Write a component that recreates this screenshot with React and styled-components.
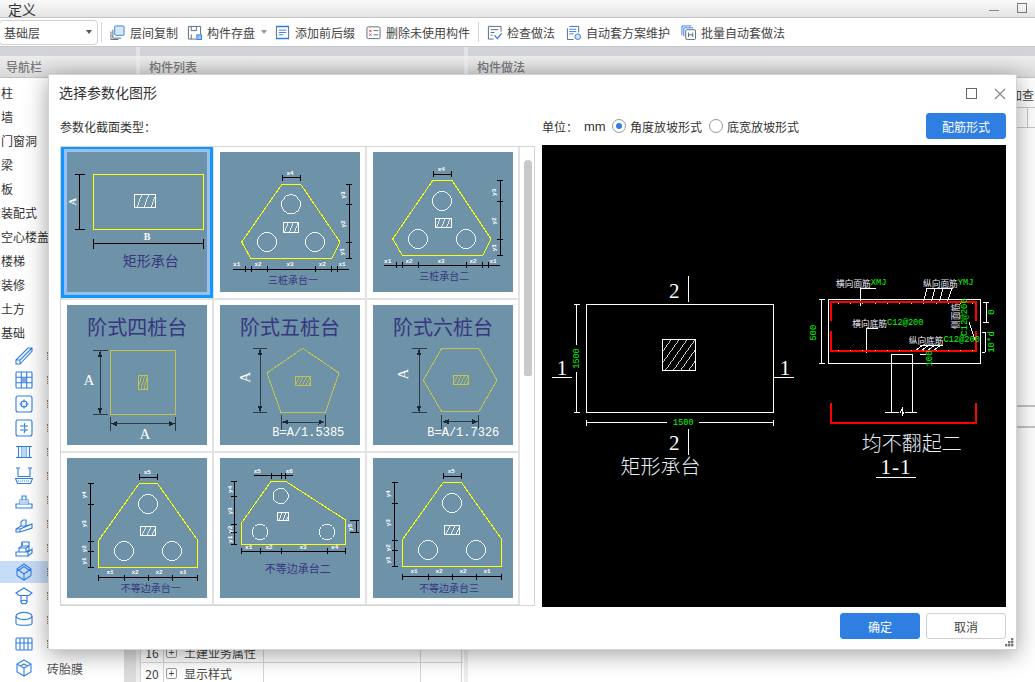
import React from 'react';
import styled, { createGlobalStyle } from 'styled-components';

const CJK = '"Noto Sans CJK SC", "Liberation Sans", sans-serif';
const BLUE = '#2f7fe2';

const Global = createGlobalStyle`
  html, body { margin: 0; padding: 0; background: #fff; }
  body { font-family: ${CJK}; font-size: 12px; color: #444; }
  * { box-sizing: border-box; }
`;

const Page = styled.div`
  position: relative; width: 1035px; height: 682px; overflow: hidden; background: #fff;
  display: flex; flex-direction: column;
`;
const TitleBar = styled.div`
  height: 18px; flex: none; display: flex; align-items: center; padding-left: 8px;
  font-size: 14px; line-height: 18px; color: #333;
  background: linear-gradient(#fafafa, #e4e4e4); border-bottom: 1px solid #c4c4c4;
`;
const TitleText = styled.span`flex: 1;`;
const WinMin = styled.span`width: 10px; height: 1px; background: #888; margin: 3px 18px 0 0;`;
const WinMax = styled.span`width: 10px; height: 10px; border: 1px solid #777; margin: -1px 8px 0 0;`;
const Toolbar = styled.div`
  height: 28px; flex: none; display: flex; align-items: center; background: #fff;
`;
const Combo = styled.div`
  width: 99px; height: 25px; margin-left: -1px; padding: 0 5px 0 4px; flex: none;
  display: flex; align-items: center; justify-content: space-between;
  border: 1px solid #d2d2d2; border-radius: 4px; color: #444;
`;
const Caret = styled.span`
  width: 0; height: 0; border-left: 3px solid transparent; border-right: 3px solid transparent;
  border-top: 4px solid ${p => p.$c || '#555'};
`;
const Sep = styled.span`width: 1px; height: 20px; background: #d8d8d8; flex: none; margin: ${p => p.$m};`;
const Tool = styled.div`
  display: flex; align-items: center; gap: 5px; flex: none; margin-right: ${p => p.$mr}px;
  color: #444; white-space: nowrap;
`;
const ToolIcon = styled.svg`width: 15px; height: 15px; flex: none; display: block;`;
const ToolCaret = styled.span`margin: 0 8px 0 6px; display: flex;`;
const Strip = styled.div`
  height: 10px; flex: none; border-top: 1px solid #c6c7cc;
  background: linear-gradient(90deg, #d3d4d9 136px, #e4e4e8 136px, #e4e4e8 140px, #d3d4d9 140px, #d3d4d9 464px, #e4e4e8 464px, #e4e4e8 468px, #d3d4d9 468px);
`;
const Columns = styled.div`flex: 1; min-height: 0; display: flex;`;
const PanelHead = styled.div`
  height: 22px; flex: none; display: flex; align-items: center; padding-left: ${p => p.$pl}px;
  font-weight: 500; color: #77797d;
  background: linear-gradient(#ededed, #d9d9d9); border-bottom: 1px solid #c2c2c2;
`;
const NavPanel = styled.div`width: 136px; flex: none; display: flex; flex-direction: column;`;
const NavBody = styled.div`flex: 1; min-height: 0; display: flex;`;
const NavColumn = styled.div`width: 124px; flex: none; display: flex; flex-direction: column;`;
const NavScroll = styled.div`flex: 1; background: #dcdcdc;`;
const NavList = styled.div`padding-top: 3px; display: flex; flex-direction: column;`;
const NavRow = styled.div`height: 24px; line-height: 24px; padding-left: 1px; color: #333;`;
const IconList = styled.div`display: flex; flex-direction: column; gap: 2px;`;
const IconRow = styled.div`
  height: 22px; display: flex; align-items: center; gap: 14px; padding-left: 15px;
  background: ${p => (p.$on ? '#c7dcf6' : 'transparent')}; color: #555; white-space: nowrap;
`;
const LabelEdge = styled.span`width: 1px; height: 8px; flex: none; border-left: 1px dotted #9a7a55;`;
const NavIcon = styled.svg`
  width: 18px; height: 18px; flex: none; fill: none; stroke: ${BLUE}; stroke-width: 1.1;
`;
const Splitter = styled.div`width: 4px; flex: none; background: #eeeeee;`;
const MidPanel = styled.div`width: 324px; flex: none; display: flex; flex-direction: column;`;
const Spacer = styled.div`flex: ${p => p.$grow ?? 1}; min-height: ${p => p.$h || 0}px;`;
const Table = styled.div`margin-bottom: -2px; border-top: 1px solid #d5d5d5; border-left: 1px solid #d5d5d5;`;
const TRow = styled.div`
  height: 21px; display: grid; grid-template-columns: 23px 100px 157px 41px;
  border-bottom: 1px solid #d5d5d5; width: 322px;
`;
const TCell = styled.div`
  display: flex; align-items: center; gap: 7px; padding-left: ${p => p.$pl || 0}px;
  justify-content: ${p => (p.$center ? 'center' : 'flex-start')};
  border-right: 1px solid #d5d5d5; color: #444; white-space: nowrap;
`;
const Plus = styled.span`
  width: 11px; height: 11px; border: 1px solid #999; border-radius: 2px; font-size: 10px;
  line-height: 9px; text-align: center; font-family: "Liberation Sans", sans-serif;
`;
const RightPanel = styled.div`flex: 1; min-width: 0; display: flex; flex-direction: column;`;
const RightTools = styled.div`
  height: 29px; flex: none; padding: 3px 0 0 530px; display: flex; align-items: center;
  white-space: nowrap; color: #444; overflow: hidden;
`;
const RightHead = styled.div`
  height: 21px; flex: none; border-top: 1px solid #c8c8c8; border-bottom: 1px solid #c8c8c8;
  padding-left: 559px;
`;
const RightHeadCell = styled.div`height: 100%; width: 1px; background: #c8c8c8;`;
const Band = styled.div`
  height: 23px; flex: none; border-top: 2px solid #c4c4c4; border-bottom: 2px solid #c4c4c4;
`;

const Dialog = styled.div`
  position: absolute; left: 48px; top: 74px; width: 969px; height: 576px; background: #fff;
  border: 1px solid #d4d4d4; box-shadow: 0 4px 22px rgba(0, 0, 0, .38);
  padding: 0 10px 10px 11px; display: flex; flex-direction: column;
`;
const DlgHead = styled.div`
  height: 37px; flex: none; display: flex; align-items: center; justify-content: space-between;
  margin-right: -3px;
`;
const DlgTitle = styled.div`font-size: 14px; color: #333; margin: -4px 0 0 -1px;`;
const DlgControls = styled.div`display: flex; align-items: center; gap: 17px; padding: 0 3px 0 0;`;
const MaxBox = styled.span`width: 11px; height: 11px; border: 1.5px solid #666;`;
const CloseIcon = styled.svg`width: 12px; height: 12px; stroke: #888; stroke-width: 1.2; display: block;`;
const Split = styled.div`
  display: grid; grid-template-columns: 475px 464px; column-gap: 7px;
`;
const OptionsRow = styled(Split)`height: 33px; flex: none; align-items: start;`;
const SectionLabel = styled.div`line-height: 30px; color: #333;`;
const Options = styled.div`display: flex; align-items: center; height: 28px; color: #333;`;
const Unit = styled.span`width: 42px;`;
const Mm = styled.span`width: 28px; font-family: "Liberation Sans", sans-serif; font-size: 13px;`;
const RadioItem = styled.label`display: flex; align-items: center; gap: 4px; margin-right: ${p => p.$mr || 0}px;`;
const RadioDot = styled.span`
  width: 14px; height: 14px; border-radius: 50%; border: 1px solid #999; background: #fff;
  display: flex; align-items: center; justify-content: center;
  &::after { content: ''; width: 6px; height: 6px; border-radius: 50%; background: ${p => (p.$on ? BLUE : 'transparent')}; }
`;
const Btn = styled.button`
  width: 80px; height: 26px; border-radius: 3px; font: 12px ${CJK}; padding: 0;
  background: ${p => (p.$primary ? BLUE : '#fff')}; color: ${p => (p.$primary ? '#fff' : '#444')};
  border: 1px solid ${p => (p.$primary ? BLUE : '#cfcfcf')};
`;
const Config = styled(Btn)`margin-left: auto;`;
const Body = styled(Split)`height: 462px; flex: none;`;
const GridBox = styled.div`
  height: 460px; margin-top: 1px; border: 1px solid #d4d4d4; display: flex; overflow: hidden;
`;
const Cells = styled.div`
  width: 459px; flex: none; display: grid; grid-template-columns: repeat(3, 153px); grid-auto-rows: 153px;
`;
const Cell = styled.div`
  padding: 5px 0 0 6px; border-right: 2px solid #e2e2e2; border-bottom: 2px solid #e2e2e2;
`;
const ThumbSvg = styled.svg`
  width: 140px; height: 140px; display: block; background: #6e92a8; shape-rendering: crispEdges;
  box-shadow: ${p => (p.$on ? '0 0 0 3px #93c1f8, 0 0 0 6px #1496ff' : 'none')};
`;
const ScrollTrack = styled.div`flex: 1; padding: 13px 0 0 4px;`;
const ScrollThumb = styled.div`width: 8px; height: 216px; background: #c9c9c9; border-radius: 4px 4px 2px 2px;`;
const PreviewSvg = styled.svg`width: 464px; height: 462px; display: block; background: #000; shape-rendering: crispEdges;`;
const Footer = styled.div`
  margin-top: 6px; height: 26px; flex: none; display: flex; justify-content: flex-end; gap: 6px;
`;
const Grip = styled.svg`position: absolute; right: 2px; bottom: 2px; width: 9px; height: 9px; fill: #777;`;

/* text inside drawings */
const Lbl = styled.text`
  font: bold 6px "Liberation Mono", monospace; fill: #fff; text-anchor: middle; dominant-baseline: central;
`;
const Cap = styled.text`
  font-family: ${CJK}; font-size: ${p => p.$s || 10}px; fill: #37377f; text-anchor: middle; dominant-baseline: central;
`;
const BigA = styled.text`
  font: ${p => (p.$small ? 'bold 10px' : '15px')} "Liberation Serif", serif; fill: #fff; text-anchor: middle; dominant-baseline: central;
`;
const Formula = styled.text`
  font: 12px "Liberation Mono", monospace; fill: #fff; text-anchor: middle; dominant-baseline: central;
`;
const CadNum = styled.text`
  font: 21px "Liberation Serif", serif; fill: #fff; text-anchor: middle; letter-spacing: ${p => p.$ls || 0}px;
`;
const CadCap = styled.text`
  font-family: ${CJK}; font-size: 20px; fill: #e8eef8; text-anchor: middle; dominant-baseline: central; font-weight: 300;
`;
const Green = styled.text`
  font: ${p => p.$s || 8}px "Liberation Mono", monospace; fill: #0f0; text-anchor: middle; dominant-baseline: central;
`;
const Note = styled.text`
  font-family: ${CJK}; font-size: 8.7px; fill: #e8e8f4; dominant-baseline: central;
`;
const GreenNote = styled.tspan`fill: #0f0; font-family: "Liberation Mono", monospace;`;

const vdim = (x, ys, t = 3) => `M${x} ${ys[0]}V${ys[ys.length - 1]}` + ys.map(y => `M${x - t} ${y}H${x + t}`).join('');
const hdim = (y, xs, t = 3) => `M${xs[0]} ${y}H${xs[xs.length - 1]}` + xs.map(x => `M${x} ${y - t}V${y + t}`).join('');

const hatchPath = (x, y, w, h, step, dx) => {
  let d = '';
  for (let c = x - dx + step; c < x + w; c += step) {
    let t0 = 0, t1 = 1;
    if (c < x) t0 = (x - c) / dx;
    if (c + dx > x + w) t1 = (x + w - c) / dx;
    if (t1 <= t0) continue;
    d += `M${(c + dx * t0).toFixed(1)} ${(y + h - h * t0).toFixed(1)}L${(c + dx * t1).toFixed(1)} ${(y + h - h * t1).toFixed(1)}`;
  }
  return d;
};
const Hatch = ({ x, y, w, h, step = 5, dx = 4, c = '#fff', sw = 1 }) => (
  <g fill="none" stroke={c} strokeWidth={sw}>
    <rect x={x} y={y} width={w} height={h} />
    <path d={hatchPath(x, y, w, h, step, dx)} strokeWidth={sw * 0.8} />
  </g>
);
const Poly = ({ p, c = '#ff0', sw = 1 }) => <polygon points={p} fill="none" stroke={c} strokeWidth={sw} />;
const Circles = ({ list, r = 9.6 }) => (
  <g fill="none" stroke="#fff" strokeWidth="0.9">
    {list.map(([x, y]) => <circle key={x} cx={x} cy={y} r={r} />)}
  </g>
);
const Dim = ({ d, c = '#000', sw = 1 }) => <path d={d} fill="none" stroke={c} strokeWidth={sw} />;
const Side = ({ x, y, children }) => <Lbl x={x} y={y} transform={`rotate(-90 ${x} ${y})`}>{children}</Lbl>;
const Marks = ({ list }) => list.map(([t, x, y]) => <Lbl key={t + x} x={x} y={y}>{t}</Lbl>);
const Sides = ({ list }) => list.map(([t, x, y]) => <Side key={t + y} x={x} y={y}>{t}</Side>);
const Arrow = ({ p }) => <polygon points={p} fill="#1c2730" />;

const T1 = () => (<>
  <rect x="26.5" y="22.5" width="110" height="55" fill="none" stroke="#ff0" />
  <Hatch x={67.5} y={42.5} w={21} h={13} step={7} dx={5} />
  <Dim d={vdim(12.5, [22.5, 77.5], 5)} />
  <BigA $small x={5.7} y={49.6} transform="rotate(-90 5.7 49.6)">A</BigA>
  <BigA $small x={80} y={84}>B</BigA>
  <Dim d={hdim(91.5, [26.5, 136.5], 5)} />
  <Cap x={83.7} y={108} $s={14}>矩形承台</Cap>
</>);
const T2 = () => (<>
  <Poly p="62,32.3 80.7,32.3 120,90 111.7,106.3 30.7,106.3 21.7,90" />
  <Circles list={[[71, 52.3], [47, 90], [95, 90]]} />
  <Hatch x={63.3} y={70.3} w={15.3} h={10} />
  <Dim d={hdim(25.7, [62, 80.7])} />
  <Dim d={vdim(129.3, [32.3, 52.3, 90, 106.3])} />
  <Dim d={hdim(117.3, [25.3, 31.3, 47.3, 95.7, 111.3, 117.3])} />
  <Dim d="M13 117.3H128.7" />
  <Marks list={[['x4', 70, 21], ['x1', 16.7, 112.3], ['x2', 38, 112.3], ['x3', 70, 112.3], ['x2', 102.3, 112.3], ['x1', 122, 112.3]]} />
  <Sides list={[['y3', 123, 43], ['y2', 123, 72], ['y1', 123, 99.7]]} />
  <Cap x={73} y={127}>三桩承台一</Cap>
</>);
const T3 = () => (<>
  <Poly p="60,28 78.7,28 118,87 110,103.3 29.3,103.3 19.7,87" />
  <Circles list={[[69, 49], [45, 87], [93, 87]]} />
  <Hatch x={62.3} y={66} w={16.3} h={9.7} />
  <Dim d={hdim(22, [60, 78.7])} />
  <Dim d={vdim(127.3, [28, 49.3, 87.3, 103.3])} />
  <Dim d={hdim(113.3, [23.7, 29.3, 45.3, 93.3, 109.3, 115.3])} />
  <Dim d="M11 113.3H127" />
  <Marks list={[['x4', 68.3, 17.3], ['x1', 14.7, 109.7], ['x2', 36, 109.7], ['x3', 68, 109.7], ['x2', 100, 109.7], ['x1', 120, 109.7]]} />
  <Sides list={[['y3', 121.3, 40.3], ['y2', 121.3, 69], ['y1', 121.3, 95.7]]} />
  <Cap x={71.3} y={123.7}>三桩承台二</Cap>
</>);
const MUTED = '#c2c24e';
const DARK = '#2c3d4a';
const T4 = () => (<>
  <Cap x={70.3} y={21.7} $s={20}>阶式四桩台</Cap>
  <rect x="43.5" y="45.5" width="65" height="64" fill="none" stroke={MUTED} />
  <Hatch x={71.5} y={70.5} w={9} h={14} step={3} dx={4} c={MUTED} />
  <Dim c={DARK} d="M33 46V109M26 45.5H40.7M26 109.5H40.7M43.5 112.3V126M108.5 112.3V126M44 118.5H108" />
  <Arrow p="33,46 30.5,52 35.5,52" /><Arrow p="33,109 30.5,103 35.5,103" />
  <Arrow p="44,118.7 50,116.2 50,121.2" /><Arrow p="108,118.7 102,116.2 102,121.2" />
  <BigA x={22} y={75}>A</BigA>
  <BigA x={78} y={129.3}>A</BigA>
</>);
const T5 = () => (<>
  <Cap x={70} y={21.7} $s={20}>阶式五桩台</Cap>
  <Poly c={MUTED} p="82.7,43.3 119,68 105.3,107.7 61,107.7 47,68" />
  <Hatch x={75.5} y={71.5} w={15} h={9} step={3.5} dx={4} c={MUTED} />
  <Dim c={DARK} d="M40 44V107M32.7 43.5H47.3M32.7 107.5H47.3M61 110V125M105.3 110V124M62 117H104" />
  <Arrow p="40,44 37.5,50 42.5,50" /><Arrow p="40,107 37.5,101 42.5,101" />
  <Arrow p="62,117 68,114.5 68,119.5" /><Arrow p="104.5,117 98.5,114.5 98.5,119.5" />
  <BigA x={25} y={72.3} transform="rotate(-90 25 72.3)">A</BigA>
  <Formula x={88.3} y={128.3}>B=A/1.5385</Formula>
</>);
const T6 = () => (<>
  <Cap x={70} y={21.7} $s={20}>阶式六桩台</Cap>
  <Poly c={MUTED} p="68.7,43.3 105.7,43.3 124,75.3 105.7,106.7 68.7,106.7 50.3,75.3" />
  <Hatch x={80.5} y={70.5} w={15} h={9} step={3.5} dx={4} c={MUTED} />
  <Dim c={DARK} d="M46 44V107M38.7 43.5H53.7M38.7 107.5H53.7M68.7 110V124M105.7 110V124M69.5 116.7H105" />
  <Arrow p="46,44 43.5,50 48.5,50" /><Arrow p="46,107 43.5,101 48.5,101" />
  <Arrow p="69.5,116.7 75.5,114.2 75.5,119.2" /><Arrow p="105,116.7 99,114.2 99,119.2" />
  <BigA x={30} y={69} transform="rotate(-90 30 69)">A</BigA>
  <Formula x={90.3} y={128.3}>B=A/1.7326</Formula>
</>);
const Uneven = ({ dx, dy, cap, capX }) => (
  <>
    <g transform={`translate(${dx} ${dy})`}>
      <Poly p="72.3,25.3 90.3,25.3 130.7,82.3 130.7,109 31.7,109 31.7,82.3" />
      <Circles list={[[81, 46], [57, 93], [105, 93]]} />
      <Hatch x={73.5} y={68.5} w={15} h={9} />
      <Dim d={hdim(19, [72.3, 90.3])} />
      <Dim d={vdim(23.7, [25.3, 46.3, 83.3, 93.3, 109])} />
      <Dim d={hdim(119.7, [31.7, 57.3, 81.7, 105.7, 130.7])} />
      <Marks list={[['x5', 80.3, 14.7], ['x1', 43, 114.7], ['x2', 68, 114.7], ['x2', 92, 114.7], ['x1', 116, 114.7]]} />
      <Sides list={[['y4', 17.3, 36.7], ['y3', 17.3, 65.7], ['y2', 17.3, 90.7], ['y1', 17.3, 103]]} />
    </g>
    <Cap x={capX} y={129}>{cap}</Cap>
  </>
);
const T7 = () => <Uneven dx={0} dy={0} cap="不等边承台一" capX={83.7} />;
const T8 = () => (<>
  <Poly p="51,23.3 65.7,23.3 125.7,62 125.7,86 21.3,86 21.3,65.3" />
  <Circles list={[[60.7, 38], [40, 74], [107, 74]]} r={7.7} />
  <Hatch x={57.5} y={54.5} w={11} h={8} step={4} dx={3} />
  <Dim d={hdim(17.7, [51.7, 61.7, 65.7])} />
  <Dim d="M34 17.7H51.7M65.7 17.7H73.3" />
  <Dim d={vdim(14.3, [23.3, 38.3, 66.3, 74.7, 86.3])} />
  <Dim d={vdim(136, [62, 74.3])} />
  <Dim d="M129.5 62H136M129.5 74.3H136" />
  <Dim d={hdim(93.3, [21.3, 40.7, 61, 107.3, 125.3])} />
  <Marks list={[['x5', 37.3, 13.3], ['x6', 69.3, 13.3], ['x1', 28.7, 89.3], ['x2', 49, 89.3], ['x3', 83, 89.3], ['x4', 114.7, 89.3]]} />
  <Sides list={[['y4', 10.7, 31.3], ['y3', 10.7, 53], ['y2', 10.7, 71.3], ['y1', 10.7, 81.3], ['y5', 130.3, 69.3]]} />
  <Cap x={77.7} y={110.3} $s={11}>不等边承台二</Cap>
</>);
const T9 = () => <Uneven dx={-2} dy={-1} cap="不等边承台三" capX={76} />;

const THUMBS = [T1, T2, T3, T4, T5, T6, T7, T8, T9];

const Preview = () => {
  const dots = [];
  for (let x = 296; x < 432; x += 12.2) { dots.push([x, 158]); dots.push([x, 205]); }
  return (
    <PreviewSvg viewBox="0 0 464 462">
      <g fill="none" stroke="#fff" strokeWidth="1">
        <rect x="44.5" y="159.5" width="187" height="108" />
        <path d="M146.5 131V157M146.5 284V310M10 232.5H30M232 232.5H252" />
        <path d={vdim(34.5, [159, 267.5], 3)} />
        <path d={hdim(277.5, [44.5, 231.5], 3)} />
      </g>
      <Hatch x={120.5} y={194.5} w={33} h={31} step={8} dx={22} />
      <rect x="125" y="272" width="32" height="11" fill="#000" />
      <rect x="29" y="200" width="11" height="27" fill="#000" />
      <Green x={141.3} y={277.5} $s={8.5}>1500</Green>
      <Green x={34.5} y={213.5} $s={8.5} transform="rotate(-90 34.5 213.5)">1500</Green>
      <CadNum x={132.3} y={152.5}>2</CadNum>
      <CadNum x={132.3} y={305}>2</CadNum>
      <CadNum x={20} y={230}>1</CadNum>
      <CadNum x={243} y={230}>1</CadNum>
      <CadCap x={118.5} y={320.5}>矩形承台</CadCap>

      <g fill="none" stroke="#fff" strokeWidth="1">
        <rect x="286.5" y="154.5" width="152" height="64" />
        <path d="M349.5 268V209.5H370.5V268M343 267.5H357M363 267.5H375M358 267.5L360 264V271L362 267.5" />
        <path d={vdim(279.5, [154.5, 218.5], 3)} />
        <path d="M318.5 161V143.5H334M324.5 208V183.5H336M385 143.5H411M385 143.5L381 158M393 143.5L389 158M401 143.5L397 158M410 143.5L405 158" />
        <path d="M378 200.5H401M380 200.5L373 206M386 200.5L379 206M392 200.5L385 206M398 200.5L391 206M378 209.5H384M427 177L434 198" />
        <path d="M441 157.5H447M441 177.5H447M444 157.5V177.5M443 187V207M440 187H443M440 207H443" />
      </g>
      <path d="M288.5 175.5V157H433.5V175.5M288.5 185.5V206H433.5V185.5" fill="none" stroke="#f00" strokeWidth="2" />
      <path d="M289 258V278H433.7V258" fill="none" stroke="#f00" strokeWidth="2" />
      {dots.map(([x, y]) => <rect key={`${x}-${y}`} x={x} y={y - 0.5} width="1" height="1" fill="#ff0" />)}

      <Note x={294} y={138}>横向面筋<GreenNote>XMJ</GreenNote></Note>
      <Note x={381} y={138}>纵向面筋<GreenNote>YMJ</GreenNote></Note>
      <Note x={310.3} y={178}>横向底筋<GreenNote>C12@200</GreenNote></Note>
      <Note x={366.7} y={195}>纵向底筋<GreenNote>C12@200</GreenNote></Note>
      <Note x={413} y={184} transform="rotate(-90 413 184)">侧面筋</Note>
      <Green x={423} y={172} $s={9} transform="rotate(-90 423 172)">C12@200</Green>
      <Green x={272} y={187.7} $s={9} transform="rotate(-90 272 187.7)">500</Green>
      <Green x={387.5} y={213.5} $s={9} transform="rotate(-90 387.5 213.5)">100</Green>
      <Green x={450} y={167} $s={9} transform="rotate(-90 450 167)">0</Green>
      <Green x={450} y={197} $s={9} transform="rotate(-90 450 197)">10*d</Green>

      <CadCap x={369.7} y={297.3}>均不翻起二</CadCap>
      <CadNum x={354} y={329} $ls={1}>1-1</CadNum>
      <path d="M334 332.5H374" stroke="#fff" strokeWidth="1" />
    </PreviewSvg>
  );
};

const G = '#56687a';
const TOOL_ICONS = [
  <><path d="M3 5V14H12M1 7V15.5H9" fill="none" stroke={G} /><rect x="5" y="1" width="10" height="10" rx="1" fill="#d8e8fb" stroke={BLUE} /></>,
  <><path d="M10 15H1.5V1.5H14.5V10M4.5 1.5V6H10V1.5M4.5 15V10" fill="none" stroke={G} /><rect x="10.5" y="10.5" width="5" height="5" fill="#9cc4f4" stroke={BLUE} /></>,
  <><path d="M1 1.5H15M1 14.5H15" stroke={BLUE} strokeWidth="1.6" /><path d="M1.5 2V14M14.5 2V14" stroke={G} /><path d="M4 5.5H12M4 8H12M4 10.5H9" stroke={BLUE} /></>,
  <><rect x="1" y="2" width="14" height="12.5" rx="1.5" fill="none" stroke={G} /><path d="M3.5 5L6 7.5M6 5L3.5 7.5M3.5 9L6 11.5M6 9L3.5 11.5" stroke="#e23b3b" /><path d="M8 6H13M8 10.5H13" stroke={G} /></>,
  <><path d="M15 7V1.5H1.5V15H7" fill="none" stroke={G} /><path d="M4 5H12M4 8H8M4 11H6" stroke={G} /><path d="M8 11L11 14.5L15.5 9" fill="none" stroke={BLUE} strokeWidth="1.4" /></>,
  <><path d="M3.5 1.5H13.5V8M8 15.5H1.5V3.5" fill="none" stroke={G} /><path d="M3.5 4.5H11M3.5 7H11M3.5 9.5H8" stroke={BLUE} /><circle cx="12.5" cy="12.5" r="3" fill="#cfe1f9" stroke={BLUE} /></>,
  <><path d="M1 11V1H11M3 12V3H13" fill="none" stroke={BLUE} /><rect x="5" y="5" width="10.5" height="10.5" rx="1.5" fill="#fff" stroke={G} /><path d="M8 8V13M12.5 8V13M8 10.5H12.5" stroke={G} /></>,
];
const TOOLS = [
  { t: '层间复制', mr: 9 }, { t: '构件存盘', mr: 0, caret: true }, { t: '添加前后缀', mr: 11 }, { t: '删除未使用构件', mr: 8, end: true },
  { t: '检查做法', mr: 11 }, { t: '自动套方案维护', mr: 11 }, { t: '批量自动套做法', mr: 0 },
];

const NAV = ['柱', '墙', '门窗洞', '梁', '板', '装配式', '空心楼盖', '楼梯', '装修', '土方', '基础'];
const NAV_ICONS = [
  <path d="M1 13L13 1H17V4L5 17H1ZM1 13H5V17M5 13L17 1" />,
  <><rect x="1" y="1" width="16" height="16" rx="1" /><path d="M1 6.3H17M1 11.7H17M6.3 1V17M11.7 1V17" /><rect x="7.8" y="7.8" width="2.4" height="2.4" /></>,
  <><rect x="1" y="1" width="16" height="16" rx="2" /><circle cx="9" cy="9" r="3" /><path d="M9 4.5V13.5M4.5 9H13.5" strokeDasharray="3 3" /></>,
  <><rect x="1" y="1" width="16" height="16" rx="2" /><path d="M5 7H13M5 11H13M10 4C8 7 12 10 9 14" /></>,
  <><path d="M1 3.5H17M1 14.5H17M3.5 3.5V14.5M7 3.5V14.5M11 3.5V14.5M14.5 3.5V14.5" /><rect x="7" y="4" width="4" height="10" fill="#bcd6f7" stroke="none" /></>,
  <><path d="M3 1V9.5H15V1M1 1H5M13 1H17" /><path d="M0.5 11.5H17.5L15.5 16.5H2.5Z" /><path d="M3 14H15" strokeDasharray="1 1" /></>,
  <><path d="M1 13H17V17H1ZM5 9H13V13H5ZM7 5H11V9H7Z" /><rect x="5" y="9" width="8" height="4" fill="#bcd6f7" stroke="none" /></>,
  <path d="M1 14L6 11V7L8 5H11V11L17 9V13L5 17H1ZM1 14H5V17M5 14L17 9M6 11H11" />,
  <><path d="M1 13H13V17H1ZM13 13L17 10V14L13 17M4 9H11V13H4ZM11 9L14 7V11L11 13M7 3H14V7H7Z" /><path d="M4 9L7 7M7 3V7" /></>,
  <><path d="M9 1L16 6L9 11L2 6ZM2 6V12.5M16 6V12.5M9 11V17M2 12.5L9 17L16 12.5" /><path d="M3.5 7.5L9 3.5L14.5 7.5" /></>,
  <><path d="M1 6L9 1L17 6L14 8.5H4ZM6 8.5V15M12 8.5V15" /><ellipse cx="9" cy="15" rx="3" ry="1.8" /></>,
  <><ellipse cx="9" cy="5" rx="8" ry="3.6" /><path d="M1 5V12.5C1 14.8 17 14.8 17 12.5V5" /></>,
  <><rect x="1" y="3" width="16" height="12" rx="1" /><path d="M1 8H17M5 3V15M9 3V15M13 3V15" /></>,
  <path d="M9 1L16 5V13L9 17L2 13V5ZM2 5L9 9L16 5M9 9V17M5.5 7L9 5L12.5 7" />,
];

export default function App() {
  return (
    <Page>
      <Global />
      <TitleBar><TitleText>定义</TitleText><WinMin /><WinMax /></TitleBar>
      <Toolbar>
        <Combo>基础层<Caret /></Combo>
        <Sep $m="0 8px 0 3px" />
        {TOOLS.map((tool, i) => (
          <React.Fragment key={tool.t}>
            <Tool $mr={tool.mr}>
              <ToolIcon viewBox="0 0 16 16">{TOOL_ICONS[i]}</ToolIcon>{tool.t}
            </Tool>
            {tool.caret && <ToolCaret><Caret $c="#999" /></ToolCaret>}
            {tool.end && <Sep $m="0 8px 0 0" />}
          </React.Fragment>
        ))}
      </Toolbar>
      <Strip />
      <Columns>
        <NavPanel>
          <PanelHead $pl={6}>导航栏</PanelHead>
          <NavBody>
            <NavColumn>
              <NavList>{NAV.map(n => <NavRow key={n}>{n}</NavRow>)}</NavList>
              <IconList>
                {NAV_ICONS.map((shape, i) => (
                  <IconRow key={i} $on={i === 9}>
                    <NavIcon viewBox="0 0 18 18">{shape}</NavIcon>
                    {i === 13 ? '砖胎膜' : <LabelEdge />}
                  </IconRow>
                ))}
              </IconList>
            </NavColumn>
            <NavScroll />
          </NavBody>
        </NavPanel>
        <Splitter />
        <MidPanel>
          <PanelHead $pl={9}>构件列表</PanelHead>
          <Spacer />
          <Table>
            <TRow>
              <TCell $center>16</TCell>
              <TCell $pl={2}><Plus>+</Plus>土建业务属性</TCell>
              <TCell /><TCell />
            </TRow>
            <TRow>
              <TCell $center>20</TCell>
              <TCell $pl={2}><Plus>+</Plus>显示样式</TCell>
              <TCell /><TCell />
            </TRow>
          </Table>
        </MidPanel>
        <Splitter />
        <RightPanel>
          <PanelHead $pl={9}>构件做法</PanelHead>
          <RightTools>添加查询</RightTools>
          <RightHead><RightHeadCell /></RightHead>
          <Spacer />
          <Band />
          <Spacer $grow={0} $h={254} />
        </RightPanel>
      </Columns>

      <Dialog>
        <DlgHead>
          <DlgTitle>选择参数化图形</DlgTitle>
          <DlgControls>
            <MaxBox />
            <CloseIcon viewBox="0 0 12 12"><path d="M1 1L11 11M11 1L1 11" /></CloseIcon>
          </DlgControls>
        </DlgHead>
        <OptionsRow>
          <SectionLabel>参数化截面类型：</SectionLabel>
          <Options>
            <Unit>单位：</Unit>
            <Mm>mm</Mm>
            <RadioItem $mr={7}><RadioDot $on />角度放坡形式</RadioItem>
            <RadioItem><RadioDot />底宽放坡形式</RadioItem>
            <Config $primary>配筋形式</Config>
          </Options>
        </OptionsRow>
        <Body>
          <GridBox>
            <Cells>
              {THUMBS.map((Thumb, i) => (
                <Cell key={i}>
                  <ThumbSvg viewBox="0 0 140 140" $on={i === 0}><Thumb /></ThumbSvg>
                </Cell>
              ))}
            </Cells>
            <ScrollTrack><ScrollThumb /></ScrollTrack>
          </GridBox>
          <Preview />
        </Body>
        <Footer>
          <Btn $primary>确定</Btn>
          <Btn>取消</Btn>
        </Footer>
        <Grip viewBox="0 0 9 9">
          <rect x="6" y="0" width="2.4" height="2.4" /><rect x="3" y="3" width="2.4" height="2.4" /><rect x="6" y="3" width="2.4" height="2.4" />
          <rect x="0" y="6" width="2.4" height="2.4" /><rect x="3" y="6" width="2.4" height="2.4" /><rect x="6" y="6" width="2.4" height="2.4" />
        </Grip>
      </Dialog>
    </Page>
  );
}
